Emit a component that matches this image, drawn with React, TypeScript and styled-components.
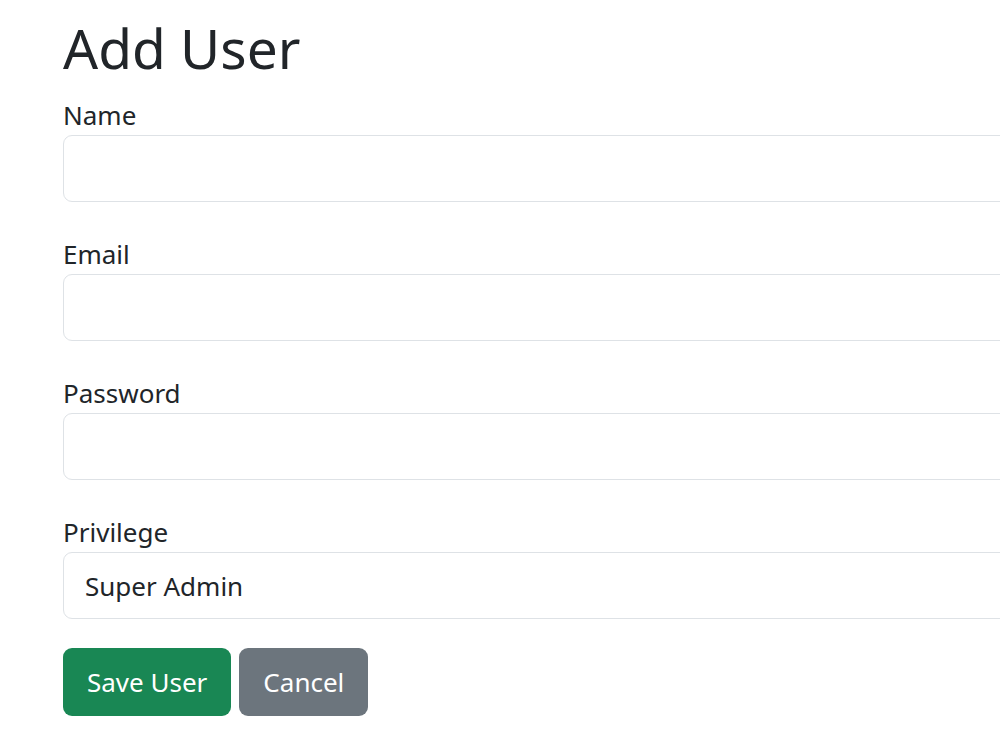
import React, { useState } from 'react';
import styled, { createGlobalStyle } from 'styled-components';

const GlobalStyle = createGlobalStyle`
  html, body {
    margin: 0;
    padding: 0;
    background: #fff;
    overflow: hidden;
  }
  body {
    font-family: "Noto Sans", "Open Sans", sans-serif;
    color: #212529;
  }
`;

const Page = styled.div`
  width: 1100px;
  padding: 0 0 0 63px;
  box-sizing: border-box;
`;

const Title = styled.h1`
  margin: 0;
  padding-top: 14px;
  font-size: 55px;
  font-weight: 400;
  line-height: 68px;
  margin-bottom: 15px;
`;

const Group = styled.div`
  margin-bottom: 34px;
`;

const Label = styled.label`
  display: block;
  font-size: 26px;
  line-height: 36px;
  margin-bottom: 2px;
`;

const Input = styled.input`
  display: block;
  width: 100%;
  height: 67px;
  box-sizing: border-box;
  border: 1.5px solid #dee2e6;
  border-radius: 9px;
  padding: 0 22px;
  font-family: inherit;
  font-size: 26px;
  color: #212529;
  background: #fff;
  outline: none;
`;

const Select = styled.select`
  display: block;
  width: 100%;
  height: 67px;
  box-sizing: border-box;
  border: 1.5px solid #dee2e6;
  border-radius: 9px;
  padding: 0 21px;
  font-family: inherit;
  font-size: 26px;
  color: #212529;
  background: #fff;
  appearance: none;
  outline: none;
`;

const Actions = styled.div`
  display: flex;
  gap: 8px;
  margin-top: -5px;
`;

const Button = styled.button<{ $variant: 'success' | 'secondary' }>`
  height: 68px;
  padding: 0 24px;
  border: none;
  border-radius: 9px;
  font-family: inherit;
  font-size: 26px;
  color: #fff;
  cursor: pointer;
  background: ${({ $variant }) => ($variant === 'success' ? '#198754' : '#6c757d')};
`;

const App: React.FC = () => {
  const [privilege, setPrivilege] = useState('super');

  return (
    <Page>
      <GlobalStyle />
      <Title>Add User</Title>
      <form onSubmit={(e) => e.preventDefault()}>
        <Group>
          <Label htmlFor="name">Name</Label>
          <Input id="name" type="text" />
        </Group>
        <Group>
          <Label htmlFor="email">Email</Label>
          <Input id="email" type="email" />
        </Group>
        <Group>
          <Label htmlFor="password">Password</Label>
          <Input id="password" type="password" />
        </Group>
        <Group>
          <Label htmlFor="privilege">Privilege</Label>
          <Select id="privilege" value={privilege} onChange={(e) => setPrivilege(e.target.value)}>
            <option value="super">Super Admin</option>
            <option value="admin">Admin</option>
            <option value="user">User</option>
          </Select>
        </Group>
        <Actions>
          <Button type="submit" $variant="success">Save User</Button>
          <Button type="button" $variant="secondary">Cancel</Button>
        </Actions>
      </form>
    </Page>
  );
};

export default App;
